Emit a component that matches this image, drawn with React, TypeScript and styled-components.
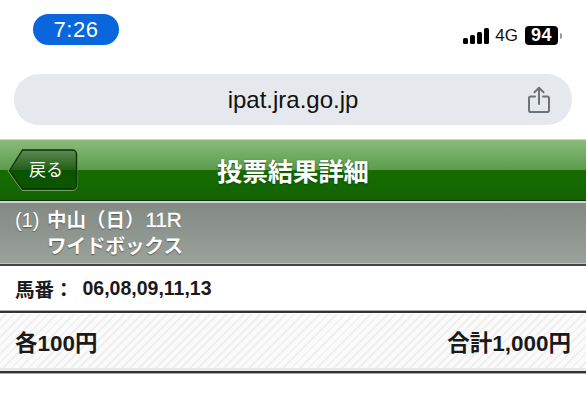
import React from 'react'
import styled, { createGlobalStyle } from 'styled-components'

const GlobalStyle = createGlobalStyle`
  html, body {
    margin: 0;
    padding: 0;
    background: #fff;
  }
  body {
    font-family: "Liberation Sans", "Noto Sans CJK JP", sans-serif;
  }
`

const App = () => {
  return (
    <Page>
      <GlobalStyle />
      <StatusBar>
        <TimePill>7:26</TimePill>
        <StatusIcons>
          <Signal>
            <SignalBar $h={6} />
            <SignalBar $h={9} />
            <SignalBar $h={12} />
            <SignalBar $h={16} />
          </Signal>
          <Network>4G</Network>
          <Battery>94</Battery>
          <BatteryCap />
        </StatusIcons>
      </StatusBar>
      <UrlBarWrap>
        <UrlBar>
          <UrlText>ipat.jra.go.jp</UrlText>
          <ShareIcon viewBox="0 0 24 28" fill="none" stroke="#6e7378" strokeWidth="2" strokeLinecap="round" strokeLinejoin="round">
            <path d="M8 10.5H3.8c-1 0-1.8.8-1.8 1.800v11.900c0 1 .8 1.800 1.800 1.800h16.400c1 0 1.800-.8 1.800-1.800V12.300c0-1-.8-1.800-1.800-1.800H16" />
            <path d="M12 18V2M7.500 6.200 12 1.800l4.500 4.400" />
          </ShareIcon>
        </UrlBar>
      </UrlBarWrap>
      <Header>
        <BackCell>
          <BackButton>
            <BackShape viewBox="0 0 71 44">
              <defs>
                <linearGradient id="backFill" x1="0" y1="0" x2="0" y2="1">
                  <stop offset="0" stopColor="#5d8a54" />
                  <stop offset="0.5" stopColor="#245f18" />
                  <stop offset="0.5" stopColor="#0b5200" />
                  <stop offset="1" stopColor="#0c5600" />
                </linearGradient>
              </defs>
              <path d="M1 23 15 2.500H66a4 4 0 0 1 4 4V38a4.500 4.500 0 0 1-4.500 4.500H15Z" fill="none" stroke="#6fa562" strokeWidth="1" />
              <path d="M2.500 22.500 15.500 2H65.500a4 4 0 0 1 4 4V37a4 4 0 0 1-4 4H15.500Z" fill="url(#backFill)" stroke="#0b3604" strokeWidth="1.400" />
            </BackShape>
            <BackLabel>戻る</BackLabel>
          </BackButton>
        </BackCell>
        <Title>投票結果詳細</Title>
      </Header>
      <SubHeader>
        <RaceNo>(1)</RaceNo>
        <div>
          <RaceLine>中山（日）<RaceCode>11R</RaceCode></RaceLine>
          <RaceLine>ワイドボックス</RaceLine>
        </div>
      </SubHeader>
      <NumbersRow>
        <NumbersLabel>馬番：</NumbersLabel>
        <Numbers>06,08,09,11,13</Numbers>
      </NumbersRow>
      <TotalRow>
        <TotalText>各100円</TotalText>
        <TotalText>合計1,000円</TotalText>
      </TotalRow>
    </Page>
  )
}

export default App

const TotalText = styled.div`
  font-size: 22.5px;
  font-weight: 700;
  color: #1a1a1a;
  margin-top: -2px;
`
const TotalRow = styled.div`
  height: 62px;
  box-sizing: border-box;
  display: flex;
  align-items: center;
  justify-content: space-between;
  padding: 0 15px;
  border-top: 2px solid #333;
  border-bottom: 2px solid #333;
  box-shadow: inset 0 1px 0 #fff, inset 0 -3px 0 #e8e8e8, 0 -1px 0 #aaa, 0 1px 0 #aaa;
  background: repeating-linear-gradient(135deg, #fbfbfb 0 4px, #f0f0f0 4px 6px);
`
const Numbers = styled.div`
  font-size: 19.500px;
  font-weight: 700;
  color: #1a1a1a;
  margin-left: 9px;
`
const NumbersLabel = styled.div`
  font-size: 19.500px;
  font-weight: 700;
  color: #1a1a1a;
`
const NumbersRow = styled.div`
  height: 45px;
  display: flex;
  align-items: center;
  padding: 0 15px;
  box-sizing: border-box;
  background: #fff;
`
const RaceCode = styled.span`
  font-family: "Liberation Sans", sans-serif;
  font-size: 20.500px;
  font-weight: 400;
  -webkit-text-stroke: 0.4px #fff;
  margin-left: 1px;
`
const RaceLine = styled.div`
  line-height: 27px;
  white-space: nowrap;
  &:first-child {
    padding-top: 1px;
    line-height: 26px;
  }
`
const RaceNo = styled.div`
  width: 32px;
  flex: none;
  line-height: 27px;
  font-weight: 400;
  font-size: 20px;
  padding-top: 1px;
`
const SubHeader = styled.div`
  height: 65px;
  box-sizing: border-box;
  display: flex;
  padding: 3px 15px 0;
  font-size: 19.500px;
  font-weight: 700;
  color: #fff;
  text-shadow: 0 1px 1px #555;
  background: linear-gradient(#838983, #9aa29c);
  border-top: 2px solid #d0d0d6;
  border-bottom: 2px solid #444;
  box-shadow: inset 0 -1px 0 #c0c6c0;
`
const Title = styled.div`
  font-size: 25.300px;
  font-weight: 700;
  color: #fff;
  text-align: center;
  text-shadow: 0 1px 2px #0f4a00;
  white-space: nowrap;
`
const BackLabel = styled.div`
  position: relative;
  font-size: 17px;
  color: #fff;
  padding: 1px 13px 0 22px;
  line-height: 44px;
`
const BackShape = styled.svg`
  position: absolute;
  left: 0;
  top: 0;
  width: 71px;
  height: 44px;
`
const BackButton = styled.div`
  position: relative;
  width: 71px;
  height: 44px;
`
const BackCell = styled.div`
  padding-left: 7px;
`
const Header = styled.div`
  height: 62px;
  box-sizing: border-box;
  display: grid;
  grid-template-columns: 1fr auto 1fr;
  align-items: center;
  border-top: 1px solid #c8d8c4;
  border-bottom: 1px solid #0b3a00;
  background: linear-gradient(#8abb7c 0%, #5c9c4c 50%, #166c00 50%, #126400 100%);
`
const ShareIcon = styled.svg`
  width: 24px;
  height: 28px;
  position: absolute;
  right: 21px;
  top: 12px;
`
const UrlText = styled.div`
  font-size: 24px;
  color: #111;
`
const UrlBar = styled.div`
  position: relative;
  height: 51px;
  border-radius: 25px;
  background: #e5e8ec;
  display: flex;
  align-items: center;
  justify-content: center;
`
const UrlBarWrap = styled.div`
  padding: 0 14px 14px;
`
const BatteryCap = styled.div`
  width: 2px;
  height: 6px;
  margin-left: 2px;
  background: #999;
  border-radius: 0 2px 2px 0;
`
const Battery = styled.div`
  width: 33px;
  height: 19px;
  margin-left: 7px;
  border-radius: 4px;
  background: #000;
  color: #fff;
  font-size: 18px;
  font-weight: 700;
  line-height: 19px;
  text-align: center;
  letter-spacing: 0.5px;
`
const Network = styled.div`
  font-size: 17px;
  color: #111;
  margin-left: 6px;
  padding-top: 1px;
`
const SignalBar = styled.div<{ $h: number }>`
  width: 5px;
  height: ${(p) => p.$h}px;
  background: #000;
  border-radius: 1.5px;
`
const Signal = styled.div`
  display: flex;
  align-items: flex-end;
  gap: 2px;
`
const StatusIcons = styled.div`
  display: flex;
  align-items: center;
  margin-top: 11px;
`
const TimePill = styled.div`
  width: 86px;
  height: 31px;
  border-radius: 16px;
  background: #0a66dc;
  color: #fff;
  font-size: 22px;
  line-height: 31px;
  text-align: center;
  letter-spacing: 0.5px;
`
const StatusBar = styled.div`
  height: 74px;
  box-sizing: border-box;
  padding: 14px 24px 0 33px;
  display: flex;
  justify-content: space-between;
  align-items: flex-start;
`
const Page = styled.div`
  width: 586px;
  height: 412px;
  overflow: hidden;
  background: #fff;
`
